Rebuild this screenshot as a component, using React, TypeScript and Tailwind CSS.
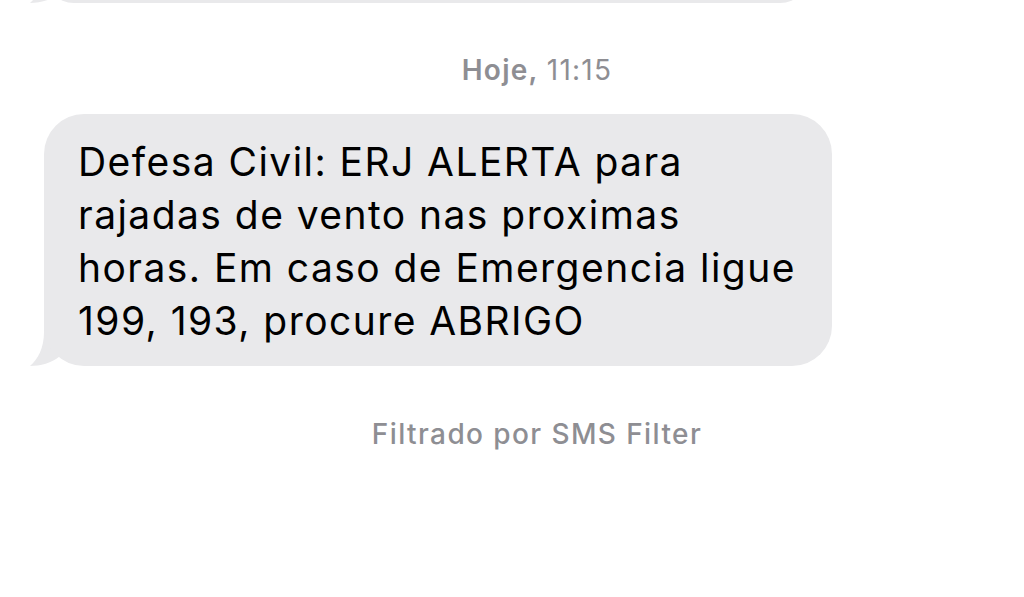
import React from 'react';

const font = { fontFamily: 'Inter, "Noto Sans", sans-serif' };

function Tail({ className }: { className?: string }) {
  return (
    <svg className={className} width="40" height="40" viewBox="0 0 40 40" fill="#e9e9eb">
      <path d="M16 0 L16 6 C16 22 10 33 2 40 C12 40 24 37 32 30 L40 30 L40 0 Z" />
    </svg>
  );
}

function Bubble({ children }: { children: React.ReactNode }) {
  return (
    <div className="relative ml-[44px] w-[788px]">
      <Tail className="absolute -left-[16px] bottom-0" />
      <div className="relative rounded-[40px] bg-[#e9e9eb] pl-[34px] pr-[20px] pt-[21px] pb-[19px] text-[39px] leading-[53px] tracking-[0.037em] text-black">
        {children}
      </div>
    </div>
  );
}

export default function App() {
  return (
    <div className="w-[1024px] h-[597px] overflow-hidden bg-white flex flex-col" style={font}>
      <div className="relative ml-[44px] w-[766px] h-[60px] -mt-[57px]">
        <Tail className="absolute -left-[16px] bottom-0" />
        <div className="relative h-full rounded-[40px] bg-[#e9e9eb]" />
      </div>

      <div className="mt-[50px] h-[34px] flex justify-center pl-[50px] text-[28px] leading-[34px] tracking-[0.045em] text-[#8e8e93]">
        <span className="font-semibold">Hoje,</span>
        <span className="ml-[8px]">11:15</span>
      </div>

      <div className="mt-[27px]">
        <Bubble>
          Defesa Civil: ERJ ALERTA para
          <br />
          rajadas de vento nas proximas
          <br />
          horas. Em caso de Emergencia ligue
          <br />
          199, 193, procure ABRIGO
        </Bubble>
      </div>

      <div className="mt-[51px] h-[34px] flex justify-center pl-[50px] text-[28px] leading-[34px] tracking-[0.05em] font-medium text-[#8e8e93]">
        Filtrado por SMS Filter
      </div>
    </div>
  );
}
